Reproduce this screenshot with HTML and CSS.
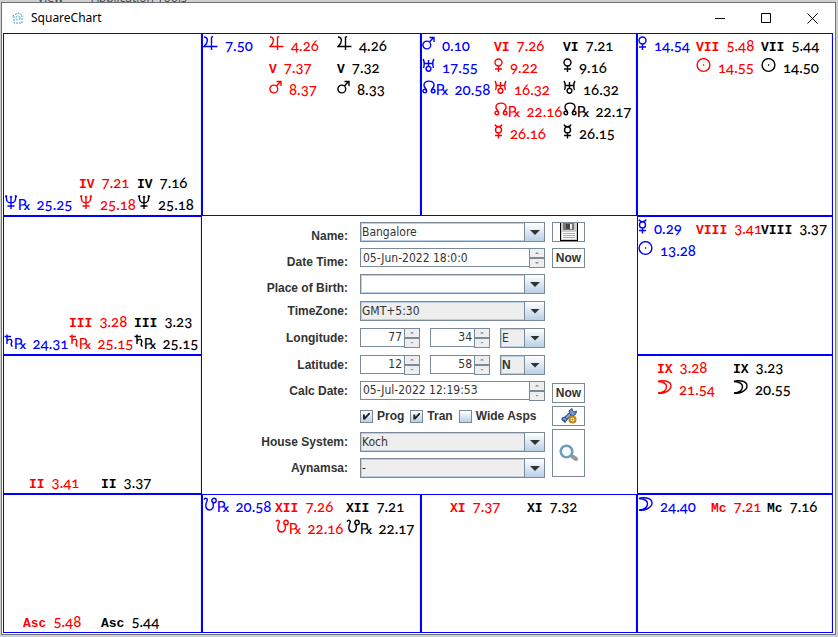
FILE: index.html
```html
<!DOCTYPE html>
<html lang="en">
<head>
<meta charset="utf-8">
<title>SquareChart</title>
<link rel="stylesheet" href="styles.css">
</head>
<body>
<svg class="defs" aria-hidden="true">
  <symbol id="jupiter" viewBox="0 0 15 15"><path d="M1 1C5 1 6 6 1 10.500H14.500M8.500 0.500V14M8.500 1.500L10 0.500"/></symbol>
  <symbol id="mars" viewBox="0 0 13 15"><circle cx="4.800" cy="9" r="3.900"/><path d="M7.500 6L11.500 1.500M7.500 1.500H12V6"/></symbol>
  <symbol id="uranus" viewBox="0 0 13 15"><path d="M1 1C2.500 3 2.500 8 1.500 10M12 1C10.500 3 10.500 8 11.500 10M2 5.500H11M6.500 2V8.500"/><circle cx="6.500" cy="10.800" r="2.400"/></symbol>
  <symbol id="north" viewBox="0 0 14 15"><path d="M4.500 11C4.500 7.500 1.500 8 2 4.500C2.800 0 11.200 0 12 4.500C12.500 8 9.500 7.500 9.500 11"/><circle cx="2.800" cy="11" r="1.800"/><circle cx="11.200" cy="11" r="1.800"/></symbol>
  <symbol id="south" viewBox="0 0 14 15"><path d="M1 2.500C3 0 5 2 4 4C2 8 2.500 13 6.500 13C10.500 13 11 8 9.500 4.500"/><circle cx="11" cy="3.500" r="2.200"/></symbol>
  <symbol id="mercury" viewBox="0 0 9 15"><path d="M1 0.500C2 3.500 7 3.500 8 0.500M4.500 9V14.500M1 11.500H8"/><circle cx="4.500" cy="5.900" r="3"/></symbol>
  <symbol id="venus" viewBox="0 0 9 15"><circle cx="4.500" cy="4.500" r="3.500"/><path d="M4.500 8V14M1 11H8"/></symbol>
  <symbol id="sun" viewBox="0 0 15 15"><circle cx="7.500" cy="7" r="6.400"/><path d="M7 7H8.200"/></symbol>
  <symbol id="moon" viewBox="0 0 15 15"><path d="M1 1.500C4 0.200 14 0 14 6C14 11 6 14 1 13C7 12.500 9.500 9.500 9.500 6.500C9.500 3.500 7 2 1 1.500Z"/></symbol>
  <symbol id="neptune" viewBox="0 0 14 15"><path d="M1 1.500L2.500 1C2 5 3 8 7 8S12 5 11.500 1L13 1.500M7 1.500V14M3.500 11H10.500M6 2.500L7 1.500L8 2.500"/></symbol>
  <symbol id="saturn" viewBox="0 0 10 15"><path d="M0.500 2.500H7M3 0.500V10M3 7C5 4.500 9 5 7.500 8.500C7 10 6.500 11.500 8.500 12.500"/></symbol>
</svg>

<div class="backdrop" aria-hidden="true"><span>View</span><span>Application Tools</span></div>

<div class="window">
  <header class="titlebar">
    <svg class="app-icon" viewBox="0 0 12 12"><path d="M0.500 4L6 1L11.500 4M2 4V11H10V4"/><circle cx="6" cy="6" r="2"/></svg>
    <h1>SquareChart</h1>
    <div class="window-buttons">
      <button aria-label="Minimize"><svg viewBox="0 0 11 11"><path d="M0 5.500H10"/></svg></button>
      <button aria-label="Maximize"><svg viewBox="0 0 11 11"><path d="M0.500 0.500H9.500V9.500H0.500Z"/></svg></button>
      <button aria-label="Close"><svg viewBox="0 0 11 11"><path d="M0.500 0.500L10.500 10.500M10.500 0.500L0.500 10.500"/></svg></button>
    </div>
  </header>

  <main class="board">
    <section class="house house-4">
      <ul class="natal"><li><svg class="w14"><use href="#neptune"/></svg><i>℞</i><b>25.25</b></li></ul>
      <ul class="prog"><li><em>IV</em><b>7.21</b></li><li><svg class="w14"><use href="#neptune"/></svg><b>25.18</b></li></ul>
      <ul class="tran"><li><em>IV</em><b>7.16</b></li><li><svg class="w14"><use href="#neptune"/></svg><b>25.18</b></li></ul>
    </section>

    <section class="house house-5 top">
      <ul class="natal"><li><svg class="w15"><use href="#jupiter"/></svg><b>7.50</b></li></ul>
      <ul class="prog"><li><svg class="w15"><use href="#jupiter"/></svg><b>4.26</b></li><li><em>V</em><b>7.37</b></li><li><svg class="w13"><use href="#mars"/></svg><b>8.37</b></li></ul>
      <ul class="tran"><li><svg class="w15"><use href="#jupiter"/></svg><b>4.26</b></li><li><em>V</em><b>7.32</b></li><li><svg class="w13"><use href="#mars"/></svg><b>8.33</b></li></ul>
    </section>

    <section class="house house-6 top">
      <ul class="natal"><li><svg class="w13"><use href="#mars"/></svg><b>0.10</b></li><li><svg class="w13"><use href="#uranus"/></svg><b>17.55</b></li><li><svg class="w14"><use href="#north"/></svg><i>℞</i><b>20.58</b></li></ul>
      <ul class="prog"><li><em>VI</em><b>7.26</b></li><li><svg class="w9"><use href="#venus"/></svg><b>9.22</b></li><li><svg class="w13"><use href="#uranus"/></svg><b>16.32</b></li><li><svg class="w14"><use href="#north"/></svg><i>℞</i><b>22.16</b></li><li><svg class="w9"><use href="#mercury"/></svg><b>26.16</b></li></ul>
      <ul class="tran"><li><em>VI</em><b>7.21</b></li><li><svg class="w9"><use href="#venus"/></svg><b>9.16</b></li><li><svg class="w13"><use href="#uranus"/></svg><b>16.32</b></li><li><svg class="w14"><use href="#north"/></svg><i>℞</i><b>22.17</b></li><li><svg class="w9"><use href="#mercury"/></svg><b>26.15</b></li></ul>
    </section>

    <section class="house house-7 top">
      <ul class="natal"><li><svg class="w9"><use href="#venus"/></svg><b>14.54</b></li></ul>
      <ul class="prog"><li><em>VII</em><b>5.48</b></li><li><svg class="w15"><use href="#sun"/></svg><b>14.55</b></li></ul>
      <ul class="tran"><li><em>VII</em><b>5.44</b></li><li><svg class="w15"><use href="#sun"/></svg><b>14.50</b></li></ul>
    </section>

    <section class="house house-3">
      <ul class="natal"><li><svg class="w10"><use href="#saturn"/></svg><i>℞</i><b>24.31</b></li></ul>
      <ul class="prog"><li><em>III</em><b>3.28</b></li><li><svg class="w10"><use href="#saturn"/></svg><i>℞</i><b>25.15</b></li></ul>
      <ul class="tran"><li><em>III</em><b>3.23</b></li><li><svg class="w10"><use href="#saturn"/></svg><i>℞</i><b>25.15</b></li></ul>
    </section>

    <form class="details">
      <label class="low" for="name">Name:</label>
      <span class="combo editable"><select id="name"><option>Bangalore</option></select></span>
      <button type="button" aria-label="Save"><svg class="save" viewBox="0 0 20 18"><path fill="#ccc" d="M2 0H18V17H2Z"/><path fill="#000" d="M1 0H2V18H1ZM18 0H19V18H18ZM1 17H19V18H1Z"/><path fill="#777" d="M4 0H15V7H4Z"/><path fill="#444" d="M7 1H11V6H7Z"/><path fill="#eee" d="M11 1H13V6H11Z"/><path fill="#fff" d="M3 9H17V16H3Z"/><path fill="#aaa" d="M4 10H16V11H4ZM4 12H16V13H4ZM4 14H16V15H4Z"/></svg></button>

      <label class="low" for="date">Date Time:</label>
      <span class="spinner"><input id="date" type="text" value="05-Jun-2022 18:0:0"><button type="button" aria-label="Later"></button><button type="button" aria-label="Earlier"></button></span>
      <button type="button">Now</button>

      <label class="low" for="place">Place of Birth:</label>
      <span class="combo editable"><select id="place"><option></option></select></span>
      <span></span>

      <label for="zone">TimeZone:</label>
      <span class="combo"><select id="zone"><option>GMT+5:30</option></select></span>
      <span></span>

      <label for="lon">Longitude:</label>
      <div class="coords">
        <span class="spinner number"><input id="lon" type="text" value="77"><button type="button" aria-label="More"></button><button type="button" aria-label="Less"></button></span>
        <span class="spinner number"><input type="text" aria-label="Longitude minutes" value="34"><button type="button" aria-label="More"></button><button type="button" aria-label="Less"></button></span>
        <span class="combo"><select aria-label="East or west"><option>E</option></select></span>
      </div>
      <span></span>

      <label for="lat">Latitude:</label>
      <div class="coords">
        <span class="spinner number"><input id="lat" type="text" value="12"><button type="button" aria-label="More"></button><button type="button" aria-label="Less"></button></span>
        <span class="spinner number"><input type="text" aria-label="Latitude minutes" value="58"><button type="button" aria-label="More"></button><button type="button" aria-label="Less"></button></span>
        <span class="combo strong"><select aria-label="North or south"><option>N</option></select></span>
      </div>
      <span></span>

      <label for="calc">Calc Date:</label>
      <span class="spinner"><input id="calc" type="text" value="05-Jul-2022 12:19:53"><button type="button" aria-label="Later"></button><button type="button" aria-label="Earlier"></button></span>
      <button class="end" type="button">Now</button>

      <span></span>
      <div class="checks">
        <label><input type="checkbox" checked>Prog</label>
        <label><input type="checkbox" checked>Tran</label>
        <label><input type="checkbox">Wide Asps</label>
      </div>
      <button type="button" aria-label="Settings"><svg class="tools" viewBox="0 0 16 16"><path fill="none" stroke="#294a80" stroke-width="4" d="M2 13L10.500 5"/><path fill="none" stroke="#7fa8dd" stroke-width="2" d="M2 13L10.500 5"/><path fill="#6f9ad2" stroke="#294a80" d="M9 6L8 3L11 0.500L11.500 3L13 4L15.500 3L14.500 6.500L11 8ZM1 10L4 9L6 11.500L4 14.500L3.500 12.500L1 12Z"/><circle cx="11.500" cy="11.500" r="3" fill="#fff3b0" stroke="#b98712" stroke-width="2"/><circle cx="11.500" cy="11.500" r="1" fill="#b98712"/></svg></button>

      <label for="system">House System:</label>
      <span class="combo"><select id="system"><option>Koch</option></select></span>
      <button class="search" type="button" aria-label="Search"><svg viewBox="0 0 20 18"><path fill="none" stroke="#999" stroke-width="4" stroke-linecap="round" d="M13.500 12.500L17 15"/><circle cx="7.500" cy="7.500" r="5.800" fill="#f5fafc" stroke="#6e9fb8" stroke-width="2.600"/></svg></button>

      <label for="ayn">Aynamsa:</label>
      <span class="combo"><select id="ayn"><option>-</option></select></span>
    </form>

    <section class="house house-8 top">
      <ul class="natal"><li><svg class="w9"><use href="#mercury"/></svg><b>0.29</b></li><li><svg class="w15"><use href="#sun"/></svg><b>13.28</b></li></ul>
      <ul class="prog"><li><em>VIII</em><b>3.41</b></li></ul>
      <ul class="tran"><li><em>VIII</em><b>3.37</b></li></ul>
    </section>

    <section class="house house-2">
      <ul class="prog"><li><em>II</em><b>3.41</b></li></ul>
      <ul class="tran"><li><em>II</em><b>3.37</b></li></ul>
    </section>

    <section class="house house-9 top">
      <ul class="prog"><li><em>IX</em><b>3.28</b></li><li><svg class="w15"><use href="#moon"/></svg><b>21.54</b></li></ul>
      <ul class="tran"><li><em>IX</em><b>3.23</b></li><li><svg class="w15"><use href="#moon"/></svg><b>20.55</b></li></ul>
    </section>

    <section class="house house-1">
      <ul class="prog"><li><em>Asc</em><b>5.48</b></li></ul>
      <ul class="tran"><li><em>Asc</em><b>5.44</b></li></ul>
    </section>

    <section class="house house-12 top">
      <ul class="natal"><li><svg class="w14"><use href="#south"/></svg><i>℞</i><b>20.58</b></li></ul>
      <ul class="prog"><li><em>XII</em><b>7.26</b></li><li><svg class="w14"><use href="#south"/></svg><i>℞</i><b>22.16</b></li></ul>
      <ul class="tran"><li><em>XII</em><b>7.21</b></li><li><svg class="w14"><use href="#south"/></svg><i>℞</i><b>22.17</b></li></ul>
    </section>

    <section class="house house-11 top">
      <ul class="prog"><li><em>XI</em><b>7.37</b></li></ul>
      <ul class="tran"><li><em>XI</em><b>7.32</b></li></ul>
    </section>

    <section class="house house-10 top">
      <ul class="natal"><li><svg class="w15"><use href="#moon"/></svg><b>24.40</b></li></ul>
      <ul class="prog"><li><em>Mc</em><b>7.21</b></li></ul>
      <ul class="tran"><li><em>Mc</em><b>7.16</b></li></ul>
    </section>
  </main>
</div>
</body>
</html>
```
FILE: styles.css
```css
* { box-sizing: border-box; }

body {
  margin: 0;
  height: 100vh;
  padding: 0 2px 2px 1px;
  display: flex;
  flex-direction: column;
  overflow: hidden;
  background: #d0d0d0;
  color: #333;
}

.defs { position: absolute; width: 0; height: 0; }

.backdrop {
  height: 2px;
  flex: none;
  overflow: hidden;
  display: flex;
  align-items: flex-end;
  gap: 28px;
  padding-left: 36px;
  font: 12px/8px "Open Sans", sans-serif;
  color: #444;
}

.window {
  flex: 1;
  min-height: 0;
  display: flex;
  flex-direction: column;
  padding: 0 2px 1px 1px;
  border: 1px solid #707070;
  background: #fff;
}

.titlebar {
  height: 30px;
  flex: none;
  display: flex;
  align-items: center;
  gap: 7px;
  padding-left: 9px;
}

.titlebar h1 {
  margin: 0;
  font: 12px/16px "Noto Sans", sans-serif;
  color: #000;
}

.app-icon {
  width: 12px;
  height: 12px;
  fill: none;
  stroke: #3aa6cf;
  stroke-dasharray: 2 1;
}

.window-buttons { margin: 0 -2px 0 auto; display: flex; }

.window-buttons button {
  width: 46px;
  height: 28px;
  padding: 0;
  border: 0;
  background: none;
}

.window-buttons svg {
  width: 11px;
  height: 11px;
  display: block;
  margin: auto;
  fill: none;
  stroke: #000;
}

.board {
  flex: 1;
  min-height: 0;
  display: grid;
  grid-template-columns: 199fr 219fr 216fr 196fr;
  grid-template-rows: 183fr 139fr 139fr 139fr;
}

.house {
  display: grid;
  align-items: end;
  border: 1px solid #00f;
  box-shadow: inset -1px 0 #eee;
  min-width: 0;
  min-height: 0;
}

.house.top { align-items: start; }

.house ul {
  margin: 0;
  padding: 0;
  list-style: none;
}

.house li {
  display: flex;
  align-items: baseline;
  height: 22px;
  white-space: nowrap;
}

.house svg {
  height: 15px;
  margin-bottom: -2px;
  fill: none;
  stroke: currentColor;
  stroke-width: 1.400;
}

.w9 { width: 9px; }
.w10 { width: 10px; }
.w13 { width: 13px; }
.w14 { width: 14px; }
.w15 { width: 15px; }

.house b {
  margin-left: 7px;
  font: 500 15px/22px Lato, sans-serif;
  font-variant-numeric: oldstyle-nums;
}

.house i + b { margin-left: 5px; }

.house em { font: bold 13px/20px "Liberation Mono", monospace; }
.house i { font: normal 15px/20px "DejaVu Sans", sans-serif; }

.natal { color: #00f; }
.prog { color: #f00; }
.tran { color: #000; }

.house-4 { grid-template-columns: 75px 58px 1fr; }
.house-5 { grid-template-columns: 66px 68px 1fr; }
.house-6 { grid-template-columns: 72px 69px 1fr; }
.house-7, .house-8 { grid-template-columns: 58px 65px 1fr; }
.house-3 { grid-template-columns: 65px 65px 1fr; }
.house-2 { grid-template-columns: 72px 1fr; padding-left: 25px; }
.house-9 { grid-template-columns: 76px 1fr; padding-left: 19px; }
.house-1 { grid-template-columns: 78px 1fr; padding-left: 19px; }
.house-12 { grid-template-columns: 72px 71px 1fr; }
.house-11 { grid-template-columns: 77px 1fr; padding-left: 28px; }
.house-10 { grid-template-columns: 73px 56px 1fr; }

.details {
  grid-area: 2 / 2 / 4 / 4;
  display: grid;
  grid-template-columns: 1fr 185px 33px;
  grid-template-rows: 26px 26px 26px 27px 27px 27px 25px 26px 26px 26px;
  column-gap: 7px;
  align-items: center;
  padding: 3px 52px 0 0;
  font: bold 12px/18px "Liberation Sans", sans-serif;
}

.details > label { justify-self: end; padding-right: 5px; }
.details > .low { align-self: end; }

.details button {
  height: 20px;
  padding: 0;
  border: 1px solid #7a8a99;
  background: #fff;
  color: #333;
  font: bold 12px/18px "Liberation Sans", sans-serif;
}

.details button svg { display: block; margin: auto; }
.details .end { align-self: end; }
.save { width: 20px; height: 18px; }
.tools { width: 16px; height: 16px; }

.details .search {
  grid-row: 9 / 11;
  grid-column: 3;
  align-self: start;
  height: 48px;
}

.search svg { width: 20px; height: 18px; }

.combo {
  position: relative;
  display: block;
  height: 20px;
  border: 1px solid #7a8a99;
}

.combo select {
  appearance: none;
  display: block;
  width: 100%;
  height: 18px;
  margin: 0;
  padding: 0 20px 0 0;
  border: 1px solid #b8cfe5;
  border-radius: 0;
  background: #eee;
  color: #333;
  font: 12px/16px "DejaVu Sans Condensed", "Noto Sans", sans-serif;
}

.combo.editable select { background: #fff; }
.combo.strong select { font: bold 12px/16px "Liberation Sans", sans-serif; }

.combo::before {
  content: "";
  position: absolute;
  top: 0;
  right: 0;
  width: 19px;
  height: 18px;
  border-left: 1px solid #7a8a99;
  background: linear-gradient(#fff, #dce8f3 50%, #b8cfe5);
  pointer-events: none;
}

.combo::after {
  content: "";
  position: absolute;
  top: 7px;
  right: 4px;
  width: 10px;
  height: 5px;
  background: #333;
  clip-path: polygon(0 0, 100% 0, 50% 100%);
  pointer-events: none;
}

.spinner {
  display: grid;
  grid-template-columns: 1fr 16px;
  grid-template-rows: 10px 10px;
}

.spinner input {
  grid-row: 1 / 3;
  width: 100%;
  min-width: 0;
  height: 19px;
  margin: 0;
  padding: 0 2px;
  border: 1px solid #7a8a99;
  border-right: 0;
  background: #fff;
  color: #333;
  font: 12px/16px "DejaVu Sans Condensed", "Noto Sans", sans-serif;
}

.number input { text-align: right; }

.details .spinner button {
  display: grid;
  place-items: center;
  height: 10px;
  background: #eee;
}

.spinner button::before {
  content: "";
  width: 4px;
  height: 2px;
  background: #7a8a99;
  clip-path: polygon(50% 0, 100% 100%, 0 100%);
}

.spinner button:last-child::before { clip-path: polygon(0 0, 100% 0, 50% 100%); }

.coords {
  display: grid;
  grid-template-columns: 60px 60px 1fr;
  gap: 10px;
}

.checks { display: flex; gap: 6px; white-space: nowrap; }
.checks label { display: flex; align-items: center; gap: 4px; }

.checks input {
  appearance: none;
  display: grid;
  place-items: center;
  width: 13px;
  height: 13px;
  margin: 0;
  border: 1px solid #7a8a99;
  background: linear-gradient(#fff, #b8cfe5);
}

.checks input:checked::before {
  content: "";
  width: 7px;
  height: 7px;
  background: #222;
  clip-path: polygon(0 30%, 25% 30%, 30% 60%, 85% 0, 100% 0, 100% 20%, 30% 100%, 0 100%);
}
```
